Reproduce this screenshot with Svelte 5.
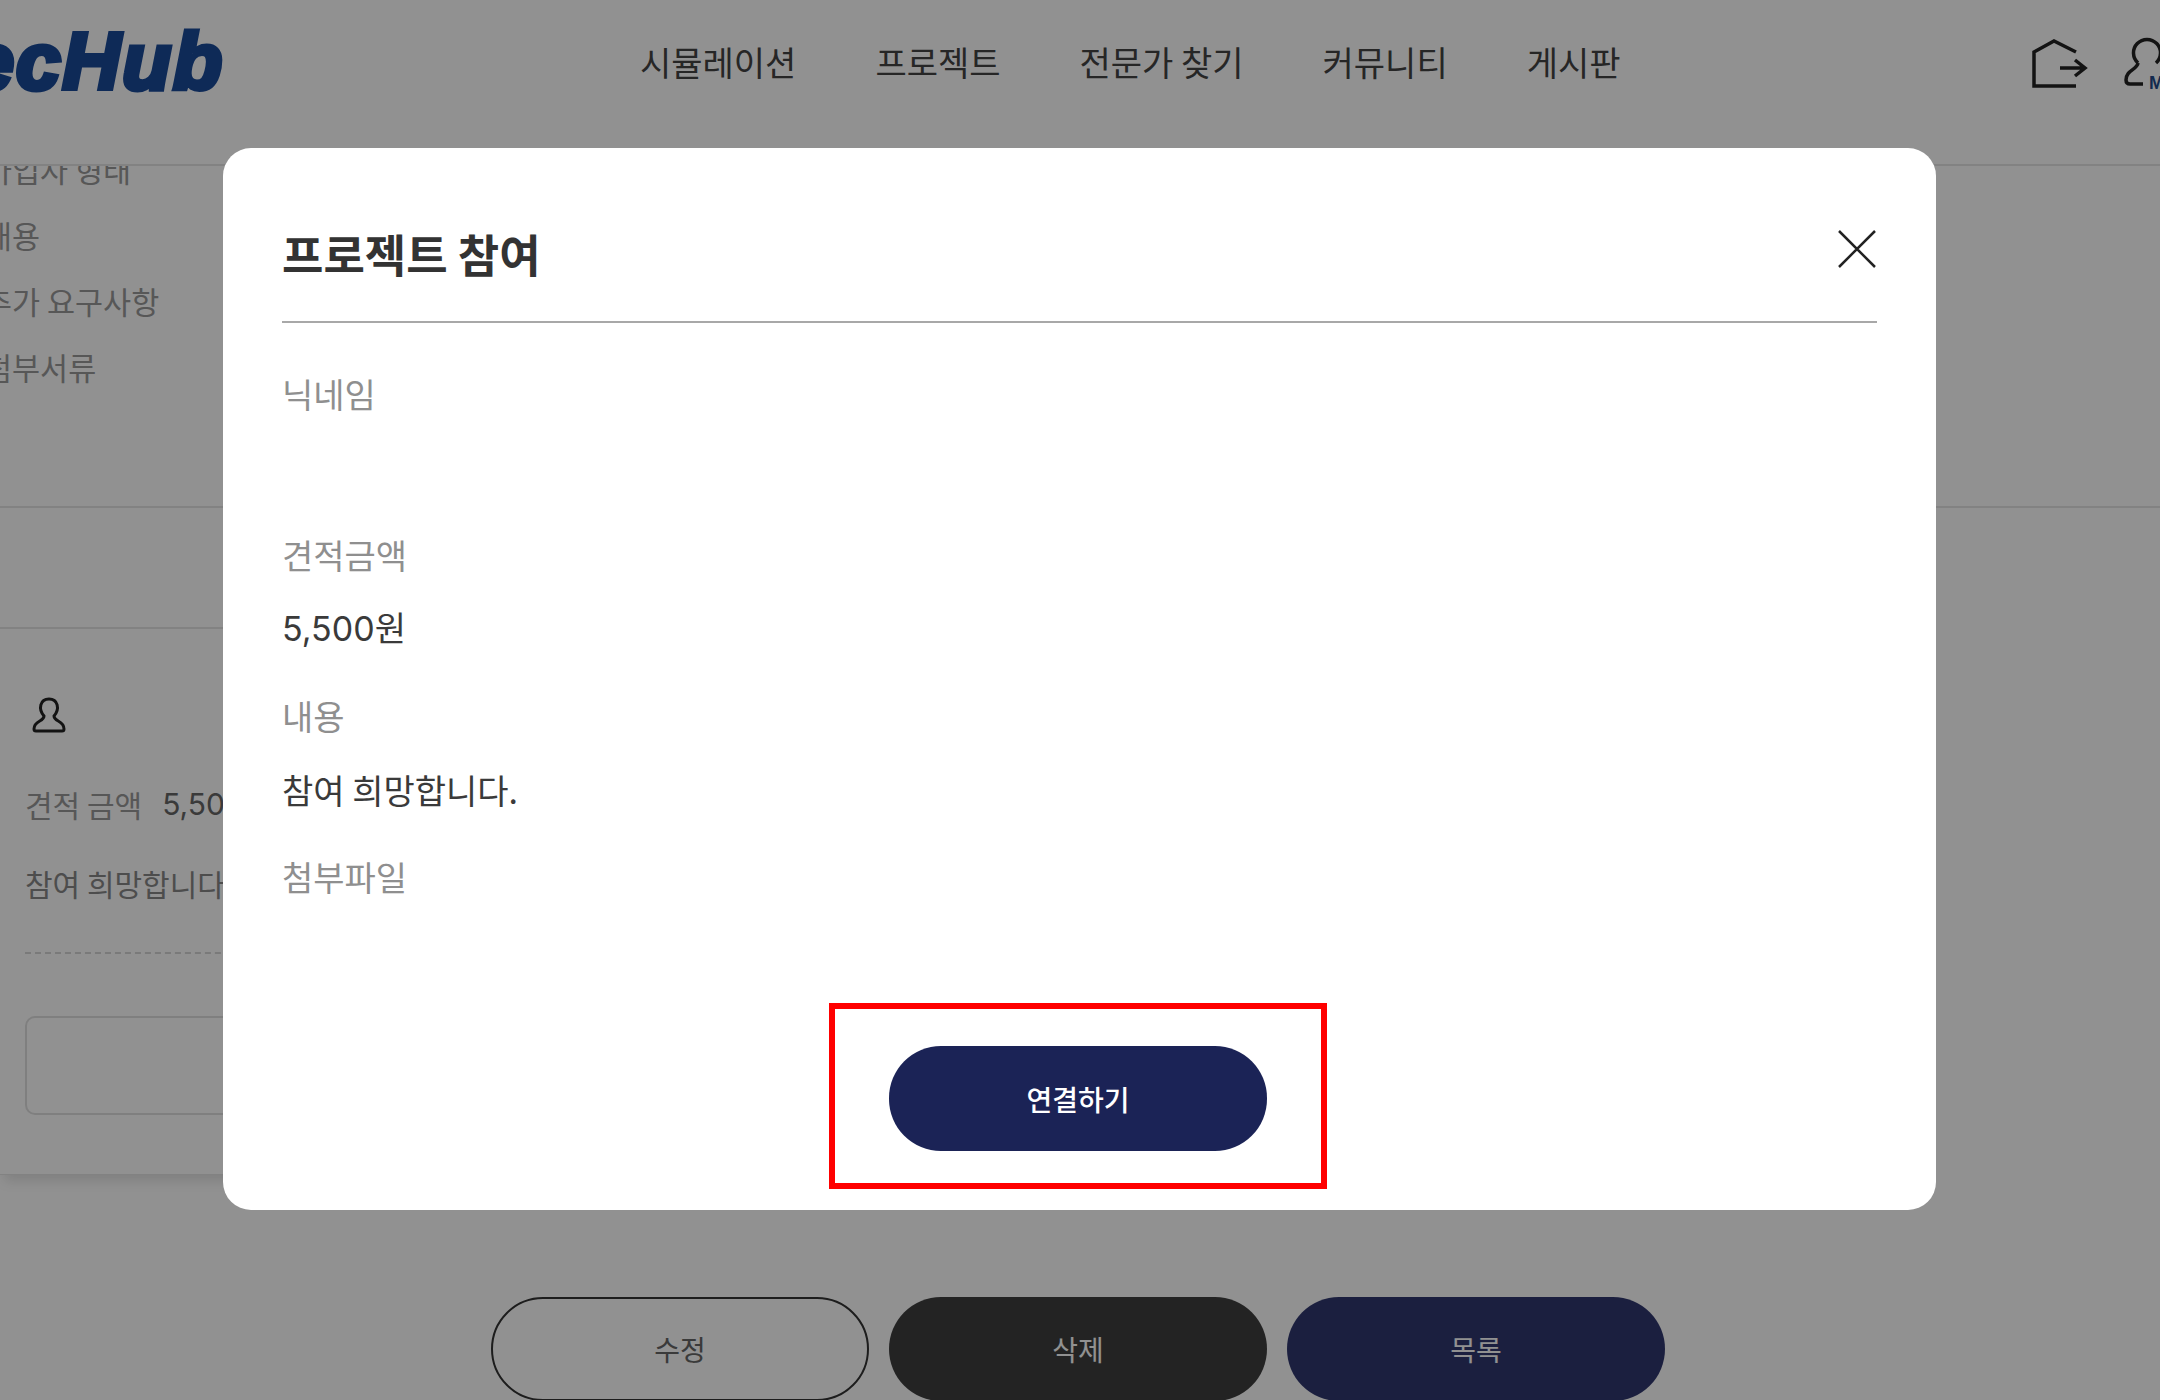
<script>
	const navItems = ['시뮬레이션', '프로젝트', '전문가 찾기', '커뮤니티', '게시판'];
	const sideItems = ['가입자 형태', '내용', '추가 요구사항', '첨부서류'];
	const fields = [
		{ label: '닉네임', value: '' },
		{ label: '견적금액', value: '5,500원', numeric: true },
		{ label: '내용', value: '참여 희망합니다.' },
		{ label: '첨부파일', value: null }
	];
</script>

<div class="page">
	<header class="topbar">
		<div class="logo"><span>TecHub</span></div>
		<nav class="nav">
			{#each navItems as item}
				<span>{item}</span>
			{/each}
		</nav>
		<div class="top-icons">
			<svg class="exit" width="56" height="50" viewBox="0 0 56 50" fill="none" stroke="#222" stroke-width="3.500">
				<path d="M44 13 22 2 2 13V47H44" />
				<path d="M28 29H53M43 21l10 8-10 8" />
			</svg>
			<div class="member">
				<svg width="40" height="52" viewBox="0 0 40 52" fill="none" stroke="#222" stroke-width="3.500">
					<path d="M15 27A13.500 13.500 0 1 1 33 27" />
					<path d="M15 27C14 34 3 34 3 44Q3 48 7 48H20" />
				</svg>
				<span class="member-tag">M</span>
			</div>
		</div>
	</header>

	<main class="content">
		<section class="side">
			{#each sideItems as item}
				<p>{item}</p>
			{/each}
		</section>
		<section class="spacer"></section>
		<section class="bid">
			<svg class="bid-user" width="34" height="36" viewBox="0 0 34 36" fill="none" stroke="#222" stroke-width="3">
				<path d="M12 19C6 12 8 2 17 2s11 10 5 17c0 6 10 4 10 13q0 2-2 2H4q-2 0-2-2c0-9 10-7 10-13z" />
			</svg>
			<div class="bid-row"><span class="bid-label">견적 금액</span><span class="bid-value">5,500원</span></div>
			<p class="bid-text">참여 희망합니다.</p>
			<div class="bid-dash"></div>
			<div class="bid-box"></div>
		</section>
		<div class="page-actions">
			<button class="pill outline">수정</button>
			<button class="pill dark">삭제</button>
			<button class="pill navy">목록</button>
		</div>
	</main>

	<div class="overlay">
		<div class="modal">
			<div class="modal-head">
				<h2>프로젝트 참여</h2>
				<svg class="close" width="38" height="38" viewBox="0 0 38 38" fill="none" stroke="#222" stroke-width="2.500">
					<path d="M1 1 37 37M37 1 1 37" />
				</svg>
			</div>
			<div class="fields">
				{#each fields as field}
					<div class="field">
						<span class="field-label">{field.label}</span>
						{#if field.value !== null}
							<span class="field-value" class:numeric={field.numeric}>{field.value}</span>
						{/if}
					</div>
				{/each}
			</div>
			<div class="modal-actions">
				<button class="pill primary">연결하기</button>
				<div class="mark"></div>
			</div>
		</div>
	</div>
</div>

<style>
	:global(body) {
		margin: 0;
	}
	.page {
		position: relative;
		width: 2160px;
		height: 1400px;
		overflow: hidden;
		background: #fff;
		color: #333;
		font-family: 'Noto Sans CJK KR', 'Noto Sans', sans-serif;
	}
	.topbar {
		position: relative;
		z-index: 1;
		display: flex;
		align-items: center;
		height: 166px;
		padding-bottom: 40px;
		background: #fff;
		border-bottom: 2px solid #e4e4e4;
		box-sizing: border-box;
	}
	.logo {
		display: flex;
		justify-content: flex-end;
		flex: none;
		width: 226px;
		padding-right: 2px;
		box-sizing: border-box;
		overflow: hidden;
		color: #1a4b9a;
		font-family: 'Liberation Sans', sans-serif;
		font-size: 80px;
		font-style: italic;
		font-weight: 700;
		letter-spacing: 2px;
		line-height: 100px;
		-webkit-text-stroke: 5px #1a4b9a;
	}
	.nav {
		display: flex;
		gap: 79px;
		margin-left: 414px;
		color: #444;
		font-size: 34px;
		line-height: 44px;
	}
	.top-icons {
		display: flex;
		align-items: flex-start;
		gap: 35px;
		margin-left: auto;
		margin-right: -43px;
	}
	.exit {
		margin-top: 3px;
	}
	.member {
		position: relative;
		width: 80px;
		height: 52px;
	}
	.member-tag {
		position: absolute;
		left: 26px;
		top: 38px;
		font-family: 'Liberation Sans', sans-serif;
		font-size: 18px;
		font-weight: 700;
		line-height: 18px;
		color: #224a8a;
	}
	.content {
		margin-top: -30px;
	}
	.side {
		height: 372px;
		box-sizing: border-box;
		margin-left: -16px;
		margin-right: -16px;
		border-bottom: 2px solid #e4e4e4;
		font-size: 30.500px;
	}
	.side p {
		margin: 0;
		height: 66px;
		line-height: 66px;
		color: #999;
	}
	.spacer {
		width: 1700px;
		height: 121px;
		box-sizing: border-box;
		border-bottom: 2px solid #e4e4e4;
	}
	.bid {
		width: 1700px;
		height: 546px;
		box-sizing: border-box;
		padding: 68px 0 0 25px;
		border-bottom: 1px solid #e4e4e4;
		box-shadow: 0 10px 12px -4px rgba(0, 0, 0, 0.12);
		font-size: 30px;
	}
	.bid-user {
		display: block;
		margin-left: 7px;
	}
	.bid-row {
		display: flex;
		gap: 20px;
		margin-top: 49px;
		line-height: 44px;
	}
	.bid-label {
		color: #999;
	}
	.bid-value {
		color: #666;
		font-family: Inter, 'Noto Sans CJK KR', sans-serif;
	}
	.bid-text {
		margin: 35px 0 0;
		line-height: 44px;
		color: #888;
	}
	.bid-dash {
		height: 0;
		margin-top: 47px;
		border-top: 2px dashed #d6d6d6;
	}
	.bid-box {
		height: 99px;
		margin-top: 62px;
		border: 2px solid #e0e0e0;
		border-radius: 10px;
		box-sizing: border-box;
	}
	.page-actions {
		display: flex;
		justify-content: center;
		gap: 20px;
		margin-top: 122px;
		padding-right: 4px;
	}
	.pill {
		flex: none;
		width: 378px;
		height: 104px;
		border: 2px solid transparent;
		border-radius: 52px;
		box-sizing: border-box;
		font-family: inherit;
		font-size: 28px;
		padding: 0;
	}
	.outline {
		background: #fff;
		border-color: #333;
		color: #666;
	}
	.dark {
		background: #3e3e3e;
		color: #fff;
	}
	.navy {
		background: #31386f;
		color: #fff;
	}
	.primary {
		height: 105px;
		background: #1b2356;
		color: #fff;
		font-weight: 500;
	}
	.overlay {
		position: absolute;
		inset: 0;
		z-index: 2;
		background: rgba(0, 0, 0, 0.43);
	}
	.modal {
		display: flex;
		flex-direction: column;
		width: 1713px;
		height: 1062px;
		margin: 148px 0 0 223px;
		padding: 0 59px;
		box-sizing: border-box;
		background: #fff;
		border-radius: 28px;
	}
	.modal-head {
		display: flex;
		align-items: flex-start;
		justify-content: space-between;
		height: 175px;
		box-sizing: border-box;
		border-bottom: 2px solid #a8a8a8;
	}
	.modal-head h2 {
		margin: 76px 0 0;
		font-size: 45px;
		font-weight: 700;
		line-height: 60px;
		color: #333;
	}
	.close {
		margin-top: 82px;
		margin-right: 1px;
	}
	.fields {
		display: flex;
		flex-direction: column;
		gap: 43px;
		margin-top: 49px;
		font-size: 34px;
		line-height: 44px;
	}
	.field {
		display: flex;
		flex-direction: column;
		gap: 30px;
		min-height: 118px;
	}
	.field-label {
		height: 44px;
		color: #8f8f8f;
	}
	.field-value {
		height: 44px;
		color: #3a3a3a;
	}
	.field-value.numeric {
		font-family: Inter, 'Noto Sans CJK KR', sans-serif;
	}
	.modal-actions {
		position: relative;
		display: flex;
		justify-content: center;
		margin-top: auto;
		margin-bottom: 59px;
		padding-right: 3px;
	}
	.mark {
		position: absolute;
		top: -43px;
		bottom: -38px;
		left: 547px;
		width: 498px;
		box-sizing: border-box;
		border: 6px solid #f00;
	}
</style>
